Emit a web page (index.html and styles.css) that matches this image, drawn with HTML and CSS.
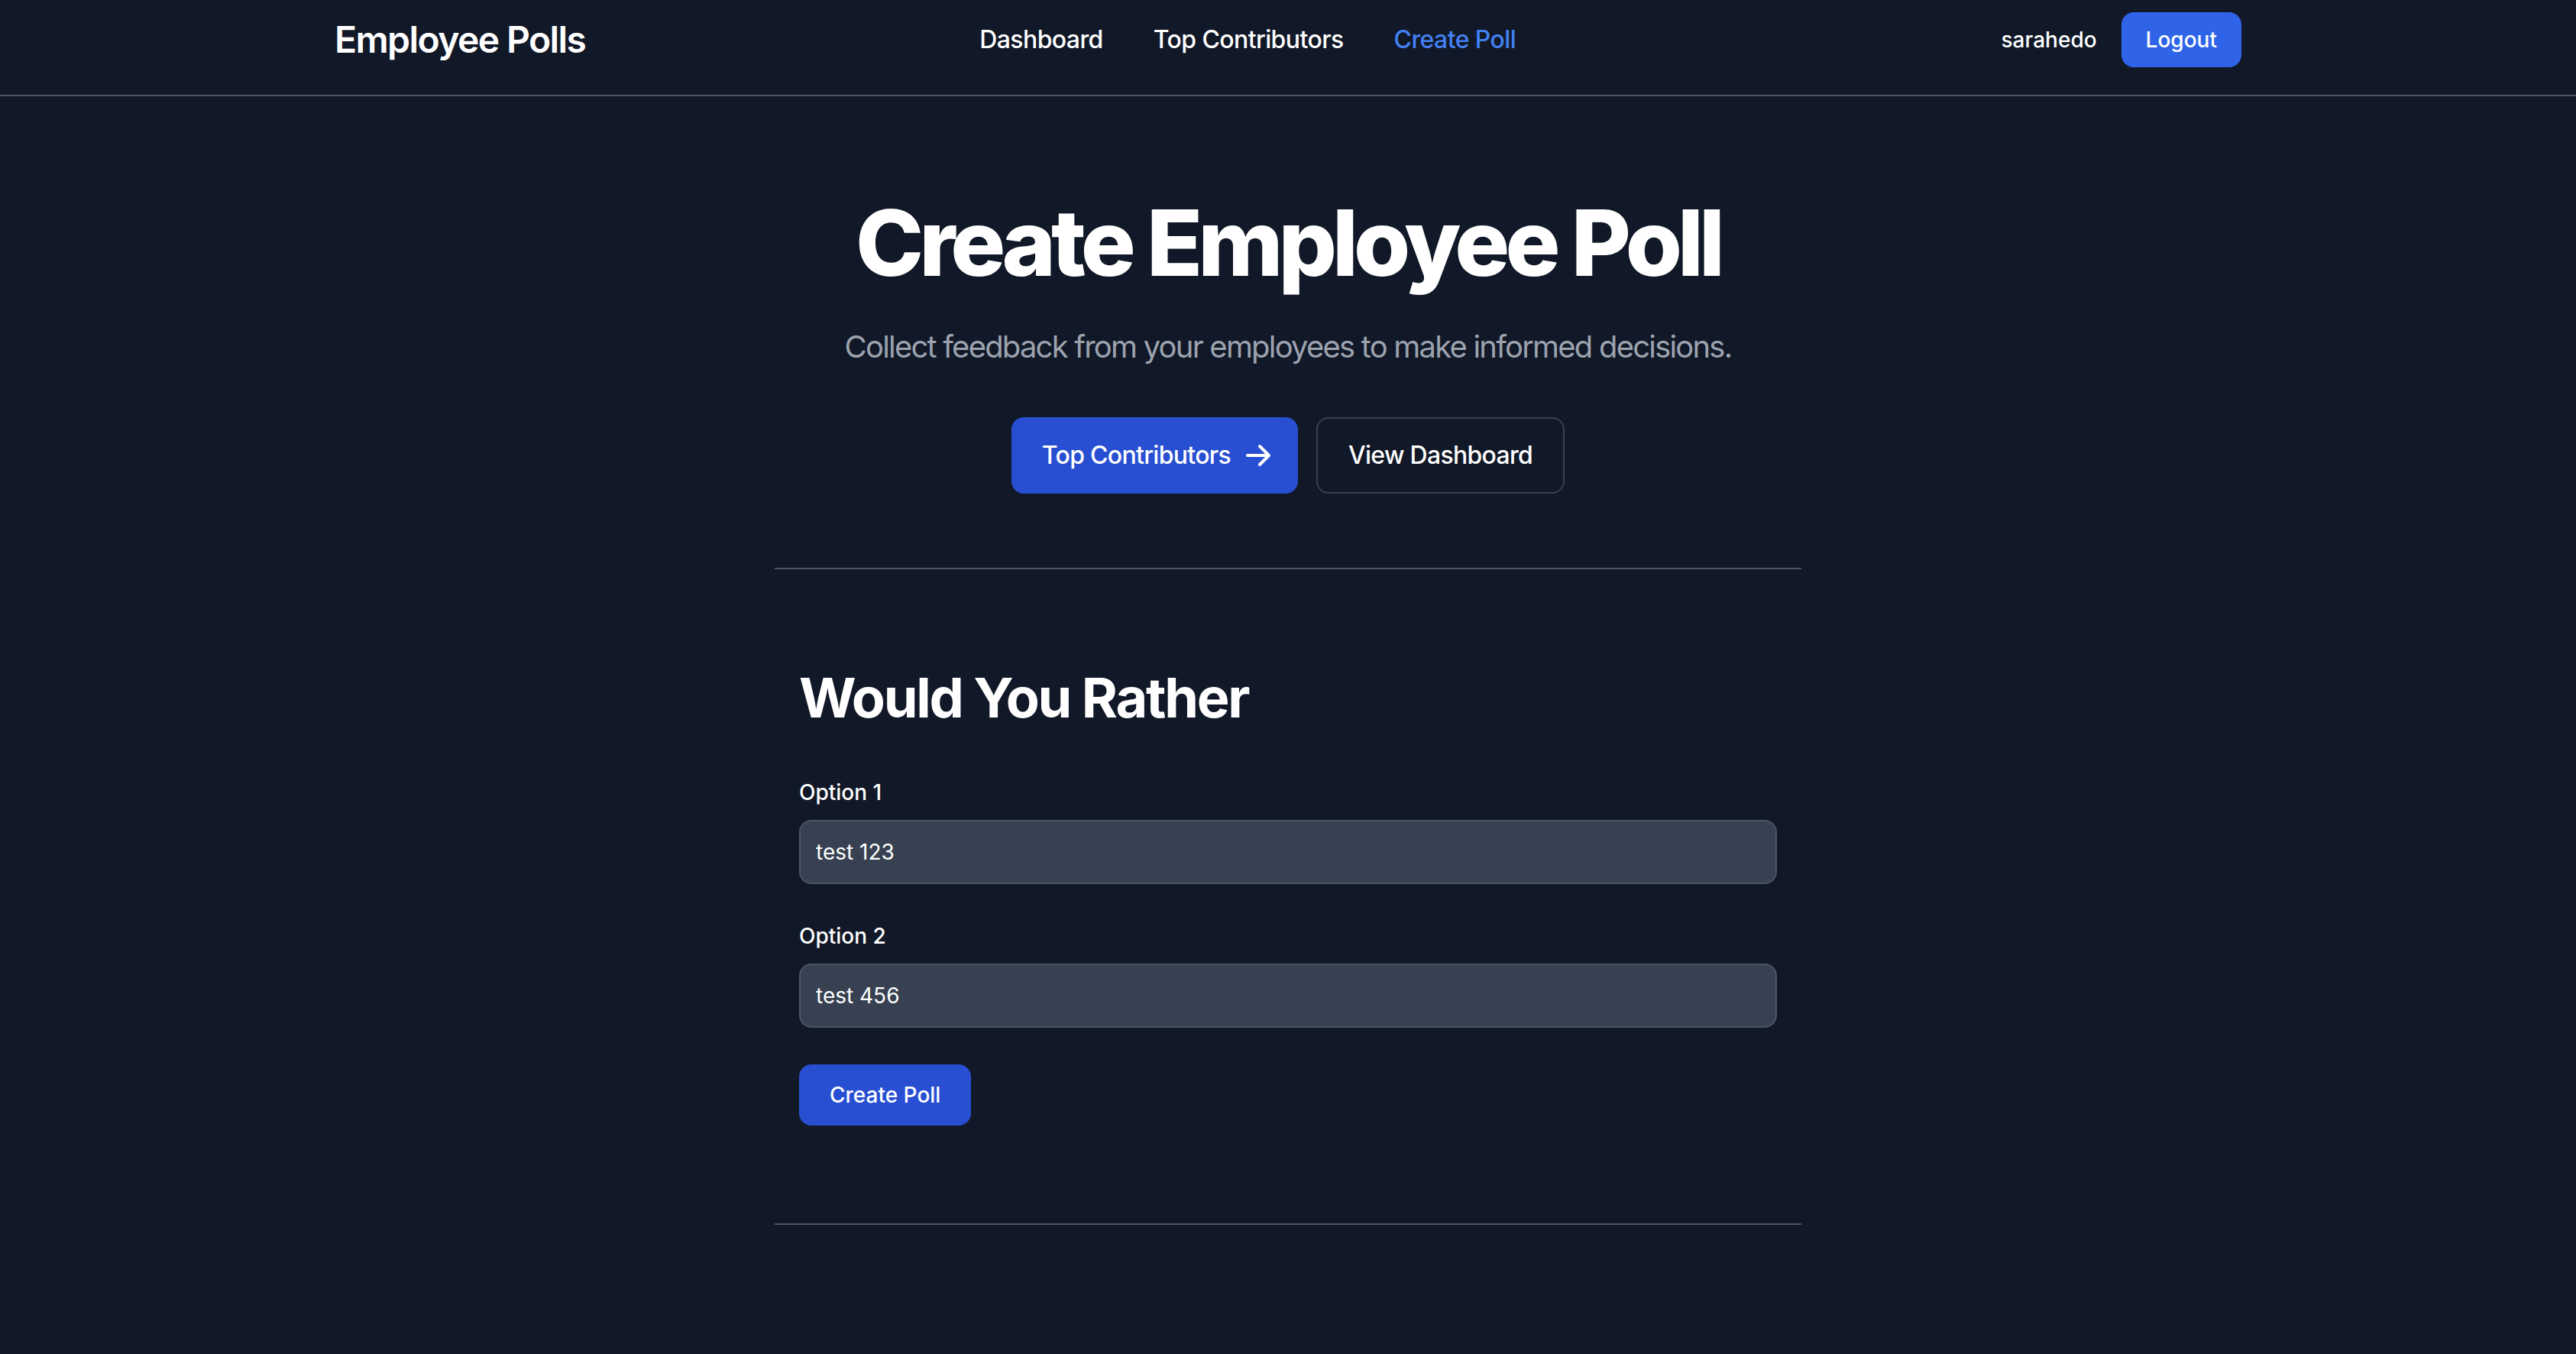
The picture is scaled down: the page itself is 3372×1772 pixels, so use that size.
FILE: index.html
```html
<!DOCTYPE html>
<html lang="en">
<head>
<meta charset="utf-8">
<title>Employee Polls</title>
<link rel="stylesheet" href="styles.css">
</head>
<body>
<nav class="navbar">
  <div class="nav-inner">
    <a class="brand" href="#">Employee Polls</a>
    <ul class="menu">
      <li><a class="menu-link" href="#">Dashboard</a></li>
      <li><a class="menu-link" href="#">Top Contributors</a></li>
      <li><a class="menu-link active" href="#">Create Poll</a></li>
    </ul>
    <div class="user">
      <span class="username">sarahedo</span>
      <button class="btn-logout" type="button">Logout</button>
    </div>
  </div>
</nav>

<section class="hero">
  <h1 class="hero-title">Create Employee Poll</h1>
  <p class="hero-sub">Collect feedback from your employees to make informed decisions.</p>
  <div class="hero-actions">
    <a class="btn-primary" href="#">Top Contributors
      <svg class="arrow" viewBox="0 0 20 20" fill="currentColor" aria-hidden="true"><path fill-rule="evenodd" d="M10.293 3.293a1 1 0 011.414 0l6 6a1 1 0 010 1.414l-6 6a1 1 0 01-1.414-1.414L14.586 11H3a1 1 0 110-2h11.586l-4.293-4.293a1 1 0 010-1.414z" clip-rule="evenodd"/></svg>
    </a>
    <a class="btn-outline" href="#">View Dashboard</a>
  </div>
</section>

<hr class="divider">

<section class="poll-form">
  <h2 class="form-title">Would You Rather</h2>
  <form>
    <div class="field">
      <label class="field-label" for="opt1">Option 1</label>
      <input class="field-input" id="opt1" type="text" value="test 123">
    </div>
    <div class="field">
      <label class="field-label" for="opt2">Option 2</label>
      <input class="field-input" id="opt2" type="text" value="test 456">
    </div>
    <button class="btn-submit" type="button">Create Poll</button>
  </form>
</section>

<hr class="divider">
</body>
</html>
```

FILE: styles.css
```css
* { box-sizing: border-box; }

html, body {
  margin: 0;
  padding: 0;
  background: #111827;
  color: #ffffff;
  font-family: Inter, "Noto Sans", "Liberation Sans", sans-serif;
}

a { text-decoration: none; color: inherit; }

/* NAVBAR */
.navbar {
  border-bottom: 2px solid #4b5563;
}
.nav-inner {
  max-width: 2560px;
  margin: 0 auto;
  padding: 16px 32px 36px;
  display: flex;
  align-items: center;
  height: 124px;
}
.brand {
  font-size: 48px;
  line-height: 64px;
  font-weight: 600;
  white-space: nowrap;
  letter-spacing: -1.6px;
}
.menu {
  list-style: none;
  margin: 0 0 0 516px;
  padding: 0;
  display: flex;
  gap: 66px;
}
.menu-link {
  font-size: 32px;
  line-height: 48px;
  font-weight: 500;
  color: #ffffff;
  letter-spacing: -0.6px;
}
.menu-link.active { color: #4381f3; }

.user {
  margin-left: auto;
  display: flex;
  align-items: center;
  gap: 32px;
}
.username {
  font-size: 28px;
  line-height: 40px;
  font-weight: 500;
}
.btn-logout {
  font-family: inherit;
  font-size: 28px;
  line-height: 40px;
  font-weight: 500;
  color: #ffffff;
  background: #2f64e9;
  border: 0;
  border-radius: 16px;
  padding: 16px 32px;
}

/* HERO */
.hero {
  padding: 132px 32px 97px;
  text-align: center;
}
.hero-title {
  margin: 0 0 48px;
  font-size: 120px;
  line-height: 120px;
  font-weight: 800;
  letter-spacing: -6px;
}
.hero-sub {
  margin: 0 0 64px;
  font-size: 40px;
  line-height: 56px;
  font-weight: 400;
  color: #9ca3af;
  letter-spacing: -1.8px;
}
.hero-actions {
  display: flex;
  justify-content: center;
  gap: 24px;
}
.btn-primary,
.btn-outline {
  display: inline-flex;
  align-items: center;
  justify-content: center;
  font-size: 32px;
  line-height: 48px;
  font-weight: 500;
  letter-spacing: -0.7px;
  border-radius: 16px;
  padding: 24px 40px;
  color: #ffffff;
}
.btn-primary {
  background: #284fd2;
}
.btn-outline {
  border: 2px solid #374151;
}
.arrow {
  width: 40px;
  height: 40px;
  margin-left: 16px;
  margin-right: -8px;
}

/* DIVIDER */
.divider {
  display: block;
  max-width: 1344px;
  height: 2px;
  margin: 0 auto;
  border: 0;
  background: #4b5563;
}

/* FORM */
.poll-form {
  max-width: 1344px;
  margin: 0 auto;
  padding: 128px 32px;
}
.form-title {
  margin: 0 0 64px;
  font-size: 72px;
  line-height: 80px;
  font-weight: 700;
  letter-spacing: -2.3px;
}
.field { margin-bottom: 48px; }
.field-label {
  display: block;
  margin-bottom: 16px;
  font-size: 28px;
  line-height: 40px;
  font-weight: 500;
}
.field-input {
  display: block;
  width: 100%;
  height: 84px;
  padding: 20px;
  font-family: inherit;
  font-size: 28px;
  line-height: 40px;
  color: #ffffff;
  background: #374151;
  border: 2px solid #4b5563;
  border-radius: 16px;
  outline: none;
}
.btn-submit {
  font-family: inherit;
  font-size: 28px;
  line-height: 40px;
  font-weight: 500;
  color: #ffffff;
  background: #284fd2;
  border: 0;
  border-radius: 16px;
  padding: 20px 40px;
}
```
